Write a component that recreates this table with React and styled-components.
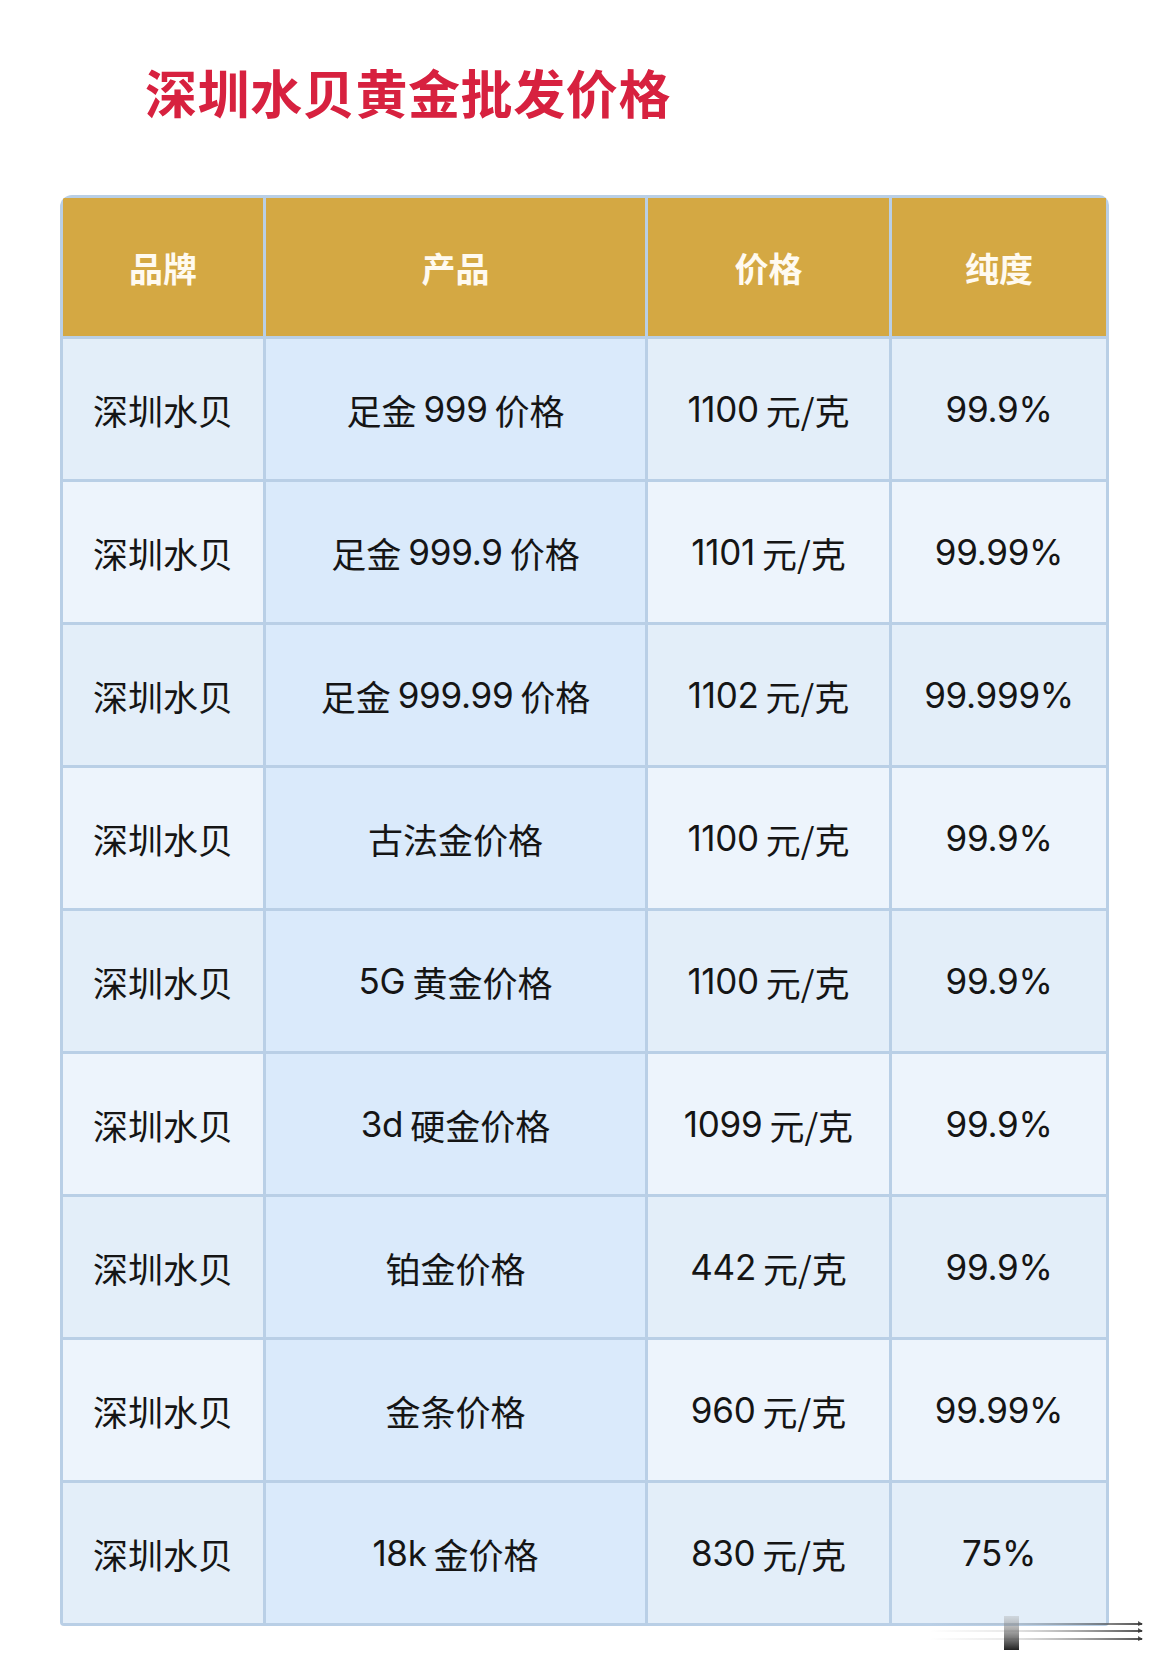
import React from "react";
import styled, { createGlobalStyle } from "styled-components";

const rows = [
  ["深圳水贝", "足金999价格", "1100元/克", "99.9%"],
  ["深圳水贝", "足金999.9价格", "1101元/克", "99.99%"],
  ["深圳水贝", "足金999.99价格", "1102元/克", "99.999%"],
  ["深圳水贝", "古法金价格", "1100元/克", "99.9%"],
  ["深圳水贝", "5G黄金价格", "1100元/克", "99.9%"],
  ["深圳水贝", "3d硬金价格", "1099元/克", "99.9%"],
  ["深圳水贝", "铂金价格", "442元/克", "99.9%"],
  ["深圳水贝", "金条价格", "960元/克", "99.99%"],
  ["深圳水贝", "18k金价格", "830元/克", "75%"],
];

const heads = ["品牌", "产品", "价格", "纯度"];

// split "足金999价格" into latin / cjk runs so the digits get a little air
function Mixed({ text }) {
  const parts = text.split(/([A-Za-z0-9.%]+)/).filter(Boolean);
  return parts.map((p, i) => {
    if (!/^[A-Za-z0-9.%]+$/.test(p)) return <span key={i}>{p}</span>;
    const prev = parts[i - 1];
    const next = parts[i + 1];
    return (
      <Latin
        key={i}
        $before={!!prev && /[\u4e00-\u9fff]$/.test(prev)}
        $after={!!next && /^[\u4e00-\u9fff]/.test(next)}
      >
        {p}
      </Latin>
    );
  });
}

function App() {
  return (
    <Page>
      <GlobalStyle />
      <Title>深圳水贝黄金批发价格</Title>
      <Table>
        {heads.map((h) => (
          <HeadCell key={h}>{h}</HeadCell>
        ))}
        {rows.map((r, i) =>
          r.map((v, j) => (
            <Cell key={i + "-" + j} $odd={i % 2 === 0} $product={j === 1}>
              <Mixed text={v} />
            </Cell>
          ))
        )}
      </Table>
      <Marker width="220" height="40" viewBox="0 0 220 40">
        <defs>
          <linearGradient id="fade" x1="0" x2="1" y1="0" y2="0">
            <stop offset="0" stopColor="#888" stopOpacity="0" />
            <stop offset="0.35" stopColor="#999" stopOpacity="0.2" />
            <stop offset="1" stopColor="#333" stopOpacity="0.85" />
          </linearGradient>
          <linearGradient id="bar" x1="0" x2="0" y1="0" y2="1">
            <stop offset="0" stopColor="#aaa" stopOpacity="0.35" />
            <stop offset="1" stopColor="#222" />
          </linearGradient>
        </defs>
        <rect x="0" y="7" width="212" height="2" fill="url(#fade)" />
        <rect x="0" y="14" width="212" height="2" fill="url(#fade)" />
        <rect x="0" y="22" width="212" height="2" fill="url(#fade)" />
        <path d="M208 5 L213 8 L208 10 Z M208 12 L213 15 L208 17 Z M208 20 L213 23 L208 25 Z" fill="#333" opacity="0.8" />
        <rect x="74" y="0" width="15" height="34" fill="url(#bar)" />
      </Marker>
    </Page>
  );
}

export default App;

const GlobalStyle = createGlobalStyle`
  html, body {
    margin: 0;
    padding: 0;
    background: #ffffff;
  }
  body {
    font-family: "Noto Sans CJK SC", "Noto Sans", sans-serif;
  }
`;

const Page = styled.div`
  position: relative;
  width: 1170px;
  height: 1673px;
  padding: 52px 0 0 60px;
  box-sizing: border-box;
  background: #ffffff;
`;

const Title = styled.h1`
  margin: 0 0 0 85px;
  font-size: 52px;
  line-height: 80px;
  font-weight: 700;
  letter-spacing: 0.6px;
  color: #d7213f;
`;

const Table = styled.div`
  margin-top: 63px;
  width: 1049px;
  box-sizing: border-box;
  display: grid;
  grid-template-columns: 200px 379px 241px 214px;
  grid-template-rows: 138px;
  grid-auto-rows: 140px;
  gap: 3px;
  padding: 3px;
  background: #b9cfe6;
  border-radius: 12px 10px 4px 4px;
  overflow: hidden;
`;

const HeadCell = styled.div`
  display: flex;
  align-items: center;
  justify-content: center;
  background: #d4a843;
  color: #fffaf0;
  font-size: 34px;
  font-weight: 700;
`;

const Cell = styled.div`
  display: flex;
  align-items: center;
  justify-content: center;
  background: ${(p) =>
    p.$product ? "#daeafb" : p.$odd ? "#e3eef9" : "#edf4fc"};
  color: #151515;
  font-size: 35px;
  font-weight: 400;
  white-space: nowrap;
`;

const Latin = styled.span`
  font-family: Inter, "Noto Sans", sans-serif;
  font-weight: 400;
  letter-spacing: -0.3px;
  margin-left: ${(p) => (p.$before ? "7px" : "0")};
  margin-right: ${(p) => (p.$after ? "7px" : "0")};
`;

const Marker = styled.svg`
  position: absolute;
  left: 930px;
  top: 1616px;
`;
